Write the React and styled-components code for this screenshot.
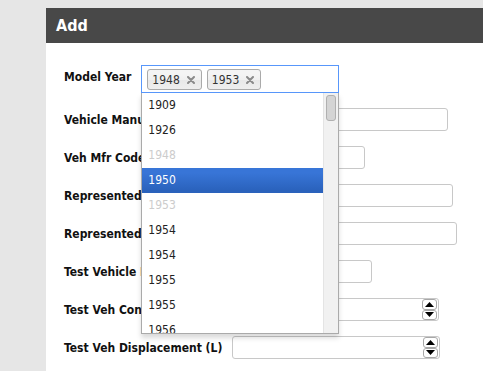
import React from 'react'
import styled, { createGlobalStyle } from 'styled-components'

const GlobalStyle = createGlobalStyle`
  html, body {
    margin: 0;
    background: #e6e6e6;
    font-family: "DejaVu Sans Condensed", "DejaVu Sans", sans-serif;
  }
`

const fields = [
  { label: 'Vehicle Manufacturer Name', w: 205 },
  { label: 'Veh Mfr Code', w: 210 },
  { label: 'Represented Test Veh Make', w: 210 },
  { label: 'Represented Test Veh Model', w: 210 },
  { label: 'Test Vehicle ID', w: 209 },
  { label: 'Test Veh Configuration #', w: 214, number: true },
  { label: 'Test Veh Displacement (L)', w: 208, number: true },
]

const years = [
  { y: '1909' },
  { y: '1926' },
  { y: '1948', off: true },
  { y: '1950', active: true },
  { y: '1953', off: true },
  { y: '1954' },
  { y: '1954' },
  { y: '1955' },
  { y: '1955' },
  { y: '1956' },
  { y: '1956' },
]

const CloseIcon = () => (
  <svg width="8" height="8" viewBox="0 0 8 8">
    <path d="M1 1 L7 7 M7 1 L1 7" stroke="#8a8a8a" strokeWidth="2" strokeLinecap="round" />
  </svg>
)

const App = () => {
  return (
    <>
      <GlobalStyle />
      <Page>
        <Panel>
          <Header>Add</Header>
          <Form>
            <Row $top>
              <Label $top>Model Year</Label>
              <Select>
                <Choices>
                  <Tag>1948<CloseIcon /></Tag>
                  <Tag>1953<CloseIcon /></Tag>
                </Choices>
                <Drop>
                  <Results>
                    {years.map((o, i) => (
                      <Result key={i} $off={o.off} $active={o.active}>{o.y}</Result>
                    ))}
                  </Results>
                  <Track>
                    <Thumb />
                  </Track>
                </Drop>
              </Select>
            </Row>
            {fields.map((f) => (
              <Row key={f.label}>
                <Label>{f.label}</Label>
                {f.number ? (
                  <NumberBox $w={f.w}>
                    <Input />
                    <Spinner>
                      <SpinBtn>
                        <svg width="9" height="5" viewBox="0 0 9 5"><path d="M0 5 L4.5 0 L9 5 Z" fill="#000" /></svg>
                      </SpinBtn>
                      <SpinBtn>
                        <svg width="9" height="5" viewBox="0 0 9 5"><path d="M0 0 L4.5 5 L9 0 Z" fill="#000" /></svg>
                      </SpinBtn>
                    </Spinner>
                  </NumberBox>
                ) : (
                  <TextBox $w={f.w} />
                )}
              </Row>
            ))}
          </Form>
        </Panel>
      </Page>
    </>
  )
}

export default App

const Page = styled.div`
  padding: 8px 0 0 46px;
  height: 363px;
  overflow: hidden;
`
const Panel = styled.div`
  background: #fff;
  height: 100%;
`
const Header = styled.div`
  height: 35px;
  background: #484848;
  color: #fff;
  font-weight: bold;
  font-size: 16px;
  display: flex;
  align-items: center;
  padding-left: 10px;
`
const Form = styled.div`
  display: flex;
  flex-direction: column;
  gap: 15px;
  padding: 22px 0 0 18px;
`
const Row = styled.div`
  display: flex;
  align-items: ${(p) => (p.$top ? 'flex-start' : 'center')};
  gap: 10px;
`
const Label = styled.div`
  font-weight: bold;
  font-size: 12px;
  color: #111;
  padding-top: ${(p) => (p.$top ? '5px' : '0')};
`
const Select = styled.div`
  position: relative;
  width: 198px;
  z-index: 2;
`
const Choices = styled.div`
  box-sizing: border-box;
  height: 28px;
  border: 1px solid #5897fb;
  background: #fff;
  display: flex;
  align-items: flex-start;
  gap: 5px;
  padding: 3px 5px;
`
const Tag = styled.div`
  display: flex;
  align-items: center;
  height: 19px;
  padding: 0 6px 0 4px;
  border: 1px solid #aaa;
  border-radius: 3px;
  background: linear-gradient(#f4f4f4 20%, #f0f0f0 50%, #e8e8e8 52%, #eee);
  color: #333;
  font-size: 12px;
  gap: 7px;
`
const Drop = styled.div`
  position: absolute;
  top: 100%;
  left: 0;
  width: 198px;
  box-sizing: border-box;
  border: 1px solid #aaa;
  border-top: 0;
  background: #fff;
  box-shadow: 0 4px 5px rgba(0, 0, 0, 0.15);
  display: flex;
  height: 241px;
`
const Results = styled.ul`
  flex: 1;
  list-style: none;
  margin: 0;
  padding: 0;
  height: 240px;
  overflow: hidden;
`
const Result = styled.li`
  padding: 5px 6px;
  line-height: 15px;
  font-size: 12px;
  color: ${(p) => (p.$off ? '#ccc' : p.$active ? '#fff' : '#222')};
  background: ${(p) => (p.$active ? 'linear-gradient(#3875d7 20%, #2a62bc 90%)' : 'transparent')};
`
const Track = styled.div`
  width: 15px;
  height: 240px;
  background: #f1f1f1;
  border-left: 1px solid #e4e4e4;
  padding: 2px 0 0 2px;
  box-sizing: border-box;
`
const Thumb = styled.div`
  width: 10px;
  height: 26px;
  box-sizing: border-box;
  background: #d4d4d4;
  border: 1px solid #b0b0b0;
  border-radius: 3px;
`
const TextBox = styled.input`
  box-sizing: border-box;
  width: ${(p) => p.$w}px;
  height: 23px;
  border: 1px solid #c8c8c8;
  border-radius: 3px;
  outline: none;
  margin: 0;
`
const NumberBox = styled.div`
  box-sizing: border-box;
  width: ${(p) => p.$w}px;
  height: 23px;
  border: 1px solid #c8c8c8;
  border-radius: 3px;
  display: flex;
  align-items: center;
  padding-right: 1px;
`
const Input = styled.input`
  flex: 1;
  min-width: 0;
  border: 0;
  outline: none;
  background: transparent;
`
const Spinner = styled.div`
  display: flex;
  flex-direction: column;
  width: 15px;
  height: 21px;
`
const SpinBtn = styled.div`
  flex: 1;
  box-sizing: border-box;
  border: 1px solid #a8a8a8;
  border-radius: 3px;
  background: #fff;
  display: flex;
  align-items: center;
  justify-content: center;
`
